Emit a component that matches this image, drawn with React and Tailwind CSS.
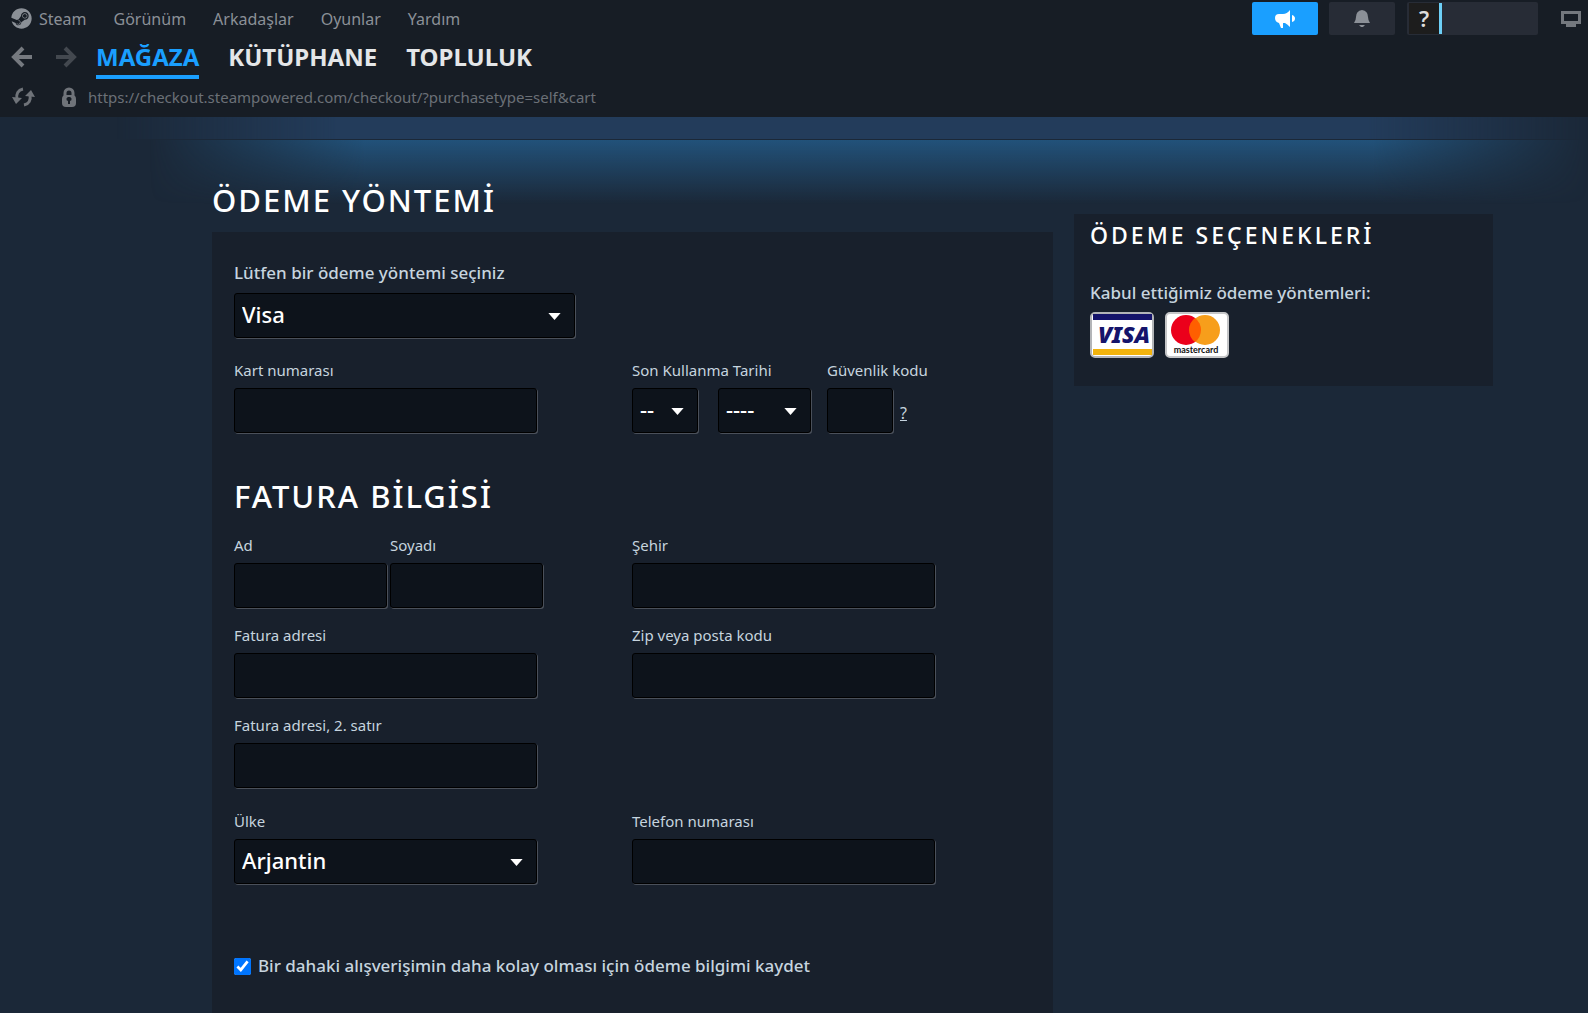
import { useState } from "react";
import { FaSteam } from "react-icons/fa";

const menuItems = ["Görünüm", "Arkadaşlar", "Oyunlar", "Yardım"];

const fieldStyle = "h-[45px] rounded-[3px] border border-black bg-[#0d131b] shadow-[1px_1px_0_#4a505a] text-white text-[22px] font-medium outline-none";

const ArrowIcon = ({ className }) => (
    <svg viewBox="0 0 22 22" className={className} fill="none" stroke="currentColor" strokeWidth="4">
        <path d="M12 2 L3 11 L12 20 M3 11 H21" />
    </svg>
)

const ReloadIcon = () => (
    <svg viewBox="0 0 24 22" className="h-[22px] w-6 text-[#6f7379]" fill="none" stroke="currentColor" strokeWidth="3">
        <path d="M11 3 C6 4 4 8 5 13" />
        <path d="M12 19 C17 18 19 14 18 9" />
        <path d="M0 11 L10 12 L4 18 Z M13 10 L23 11 L19 4 Z" fill="currentColor" stroke="none" />
    </svg>
)

const LockIcon = () => (
    <svg viewBox="0 0 16 20" className="h-5 w-4 text-[#6f7379]">
        <path d="M4 9 V6 a4 4 0 0 1 8 0 V9" fill="none" stroke="currentColor" strokeWidth="3" />
        <rect x="1" y="8" width="14" height="12" rx="4" fill="currentColor" />
        <path d="M8 10 a2 2 0 0 1 1 4 V17 H7 V14 a2 2 0 0 1 1 -4 Z" fill="#171d25" />
    </svg>
)

const HornIcon = () => (
    <svg viewBox="0 0 22 18" className="h-[18px] w-[22px]" fill="#fff">
        <path d="M1 8 Q1 4 5 4 H9 Q13 4 16 0 V17 Q13 14 11 13 L9 13 V18 H7 L5 13 Q1 12 1 8 Z" />
        <path d="M18 5 Q21 6 21 8.500 Q21 11 18 12 Z" />
    </svg>
)

const BellIcon = () => (
    <svg viewBox="0 0 16 18" className="h-[18px] w-4" fill="#8b9097">
        <path d="M8 0 Q14 1 14 7 Q14 10 16 13 H0 Q2 10 2 7 Q2 1 8 0 Z M5 15 H11 L9 17 H7 Z" />
    </svg>
)

const ScreenIcon = () => (
    <svg viewBox="0 0 20 18" className="h-[18px] w-5" fill="#74787e">
        <path d="M0 1 H20 V14 H15 V17 H5 V14 H0 Z M3 4 V11 H17 V4 Z" fillRule="evenodd" />
    </svg>
)

const VisaCard = () => (
    <svg viewBox="0 0 64 46" className="h-[46px] w-16" role="img" aria-label="Visa">
        <rect x="1" y="1" width="62" height="44" rx="4" fill="#fff" stroke="#b3b5b8" strokeWidth="2" />
        <rect x="3" y="2" width="59" height="6" fill="#15146b" />
        <rect x="3" y="37" width="59" height="6" fill="#f2b30d" />
        <text x="34" y="31" textAnchor="middle" fontSize="23" fontWeight="900" fontStyle="italic" fill="#15146b" fontFamily="Noto Sans, sans-serif">VISA</text>
    </svg>
)

const MasterCard = () => (
    <svg viewBox="0 0 64 46" className="h-[46px] w-16" role="img" aria-label="Mastercard">
        <rect x="1" y="1" width="62" height="44" rx="4" fill="#fff" stroke="#c5c6c8" strokeWidth="2" />
        <circle cx="21" cy="18" r="15" fill="#eb001b" />
        <circle cx="40" cy="18" r="15" fill="#f79e1b" />
        <path d="M30 6 A15 15 0 0 1 30 30 A15 15 0 0 1 30 6 Z" fill="#ff5f00" />
        <text x="31" y="41" textAnchor="middle" fontSize="9" fontWeight="700" fill="#111" fontFamily="Lato, sans-serif">mastercard</text>
    </svg>
)

const Label = ({ id, children, className = "" }) => (
    <label htmlFor={id} className={`block text-[15px] leading-5 ${className}`}>{children}</label>
)

const TextField = ({ id, label, width = "w-[303px]" }) => (
    <div>
        <Label id={id}>{label}</Label>
        <input id={id} name={id} type="text" className={`mt-2 block px-2 ${width} ${fieldStyle}`} />
    </div>
)

const SelectField = ({ id, options, width, ...rest }) => (
    <div className={`relative ${width}`}>
        <select id={id} name={id} className={`block w-full appearance-none px-[7px] pb-[3px] ${fieldStyle}`} {...rest}>
            {
                options.map(option => <option key={option}>{option}</option>)
            }
        </select>
        <svg viewBox="0 0 14 8" className="pointer-events-none absolute top-5 right-[14px] h-[7px] w-[13px]" fill="#fff">
            <path d="M0 0 H14 L7 8 Z" />
        </svg>
    </div>
)

const Header = () => (
    <header className="bg-[#171d25]">
        <div className="flex h-[37px] items-center justify-between pr-[7px] pl-[11px]">
            <nav className="flex items-center gap-[27px] text-base text-[#8b9097]">
                <a href="#steam" className="flex items-center gap-[7px]">
                    <FaSteam className="size-[21px]" />
                    Steam
                </a>
                {
                    menuItems.map(item => <a key={item} href="#menu">{item}</a>)
                }
            </nav>
            <div className="flex items-center">
                <button type="button" aria-label="Duyurular" className="flex h-[33px] w-[66px] items-center justify-center rounded-[2px] bg-[#1a9fff]">
                    <HornIcon />
                </button>
                <button type="button" aria-label="Bildirimler" className="ml-[11px] flex h-[33px] w-[66px] items-center justify-center rounded-[2px] bg-[#272c36]">
                    <BellIcon />
                </button>
                <button type="button" aria-label="Profil" className="ml-3 flex h-[33px] w-[131px] rounded-[2px] bg-[#272c36] p-px pl-[2px]">
                    <span className="flex h-full w-[33px] items-center justify-center border-r-[3px] border-[#6dcff6] bg-[#1d1d1d] text-[22px] font-semibold text-[#dcdcdc]">?</span>
                </button>
                <span className="ml-[23px]"><ScreenIcon /></span>
            </div>
        </div>
        <div className="flex h-10 items-center pl-[11px]">
            <button type="button" aria-label="Geri"><ArrowIcon className="size-[22px] text-[#75797f]" /></button>
            <button type="button" aria-label="İleri" className="mr-[19px] ml-[22px]"><ArrowIcon className="size-[22px] rotate-180 text-[#43484f]" /></button>
            <nav className="flex gap-[29px] pt-[3px] text-2xl leading-9 font-bold text-[#e4e6e8]">
                <a href="#store" className="border-b-4 border-[#1a9fff] text-[#1a9fff]">MAĞAZA</a>
                <a href="#library">KÜTÜPHANE</a>
                <a href="#community">TOPLULUK</a>
            </nav>
        </div>
        <div className="flex h-10 items-center pl-3 text-[15px] text-[#6b7077]">
            <button type="button" aria-label="Yenile"><ReloadIcon /></button>
            <span className="mr-[11px] ml-[25px]"><LockIcon /></span>
            https://checkout.steampowered.com/checkout/?purchasetype=self&amp;cart
        </div>
    </header>
)

const BillingForm = () => {

    const [save, setSave] = useState(true);

    return (
        <form className="grow bg-[#18202c] px-[22px] pt-[29px] pb-6">
            <label htmlFor="method" className="mb-2 block text-[17px] leading-6 font-medium">Lütfen bir ödeme yöntemi seçiniz</label>
            <SelectField id="method" options={["Visa", "Mastercard"]} width="w-[341px]" />
            <div className="mt-[22px] grid grid-cols-[398px_1fr]">
                <TextField id="card" label="Kart numarası" />
                <div className="flex">
                    <div className="w-[195px]">
                        <Label id="month">Son Kullanma Tarihi</Label>
                        <div className="mt-2 flex gap-5">
                            <SelectField id="month" options={["--"]} width="w-[66px]" />
                            <SelectField id="year" options={["----"]} width="w-[93px]" aria-label="Yıl" />
                        </div>
                    </div>
                    <div>
                        <Label id="cvv">Güvenlik kodu</Label>
                        <div className="mt-2 flex items-center gap-[7px]">
                            <input id="cvv" name="cvv" type="text" className={`w-[66px] px-2 ${fieldStyle}`} />
                            <a href="#help" className="pt-1 text-base underline">?</a>
                        </div>
                    </div>
                </div>
            </div>
            <h2 className="mt-[43px] mb-[19px] text-[31px] leading-10 font-medium tracking-[2px] text-white">FATURA BİLGİSİ</h2>
            <div className="grid grid-cols-[398px_1fr] gap-y-[17px]">
                <div className="flex gap-[3px]">
                    <TextField id="name" label="Ad" width="w-[153px]" />
                    <TextField id="surname" label="Soyadı" width="w-[153px]" />
                </div>
                <TextField id="city" label="Şehir" />
                <TextField id="address" label="Fatura adresi" />
                <TextField id="zip" label="Zip veya posta kodu" />
                <TextField id="address2" label="Fatura adresi, 2. satır" />
            </div>
            <div className="mt-[23px] grid grid-cols-[398px_1fr]">
                <div>
                    <Label id="country" className="mb-2">Ülke</Label>
                    <SelectField id="country" options={["Arjantin", "Türkiye"]} width="w-[303px]" />
                </div>
                <TextField id="phone" label="Telefon numarası" />
            </div>
            <label className="mt-[70px] flex items-center gap-[7px] text-[17px] leading-6 font-medium">
                <input type="checkbox" checked={save} onChange={(e) => setSave(e.target.checked)} className="size-[17px] accent-[#0075ff]" />
                Bir dahaki alışverişimin daha kolay olması için ödeme bilgimi kaydet
            </label>
        </form>
    )
}

export default function App() {
    return (
        <div className="flex min-h-screen flex-col bg-[#1b2838] font-['Noto_Sans',sans-serif] text-[#c6d4df]">
            <Header />
            <div className="relative flex grow flex-col">
                <div className="absolute top-0 right-0 left-[117px] h-[22px] bg-[#233c5b] mask-x-from-85%" />
                <div className="absolute top-[23px] right-0 left-[150px] h-16 bg-linear-to-b from-[#22527a] to-transparent mask-x-from-85%" />
                <main className="relative mx-auto flex w-full max-w-[1588px] grow gap-[21px] pt-[63px] pr-[95px] pl-[212px]">
                    <section className="flex grow flex-col">
                        <h1 className="mb-3 text-[31px] leading-10 font-medium tracking-[2px] text-white">ÖDEME YÖNTEMİ</h1>
                        <BillingForm />
                    </section>
                    <aside className="mt-[34px] w-[419px] shrink-0 self-start bg-[#18202c] px-4 pt-[3px] pb-7">
                        <h2 className="text-[23px] leading-9 font-medium tracking-[3px] text-white">ÖDEME SEÇENEKLERİ</h2>
                        <p className="mt-7 mb-[7px] text-[17px] leading-6 font-medium">Kabul ettiğimiz ödeme yöntemleri:</p>
                        <div className="flex gap-[11px]">
                            <VisaCard />
                            <MasterCard />
                        </div>
                    </aside>
                </main>
            </div>
        </div>
    )
}
